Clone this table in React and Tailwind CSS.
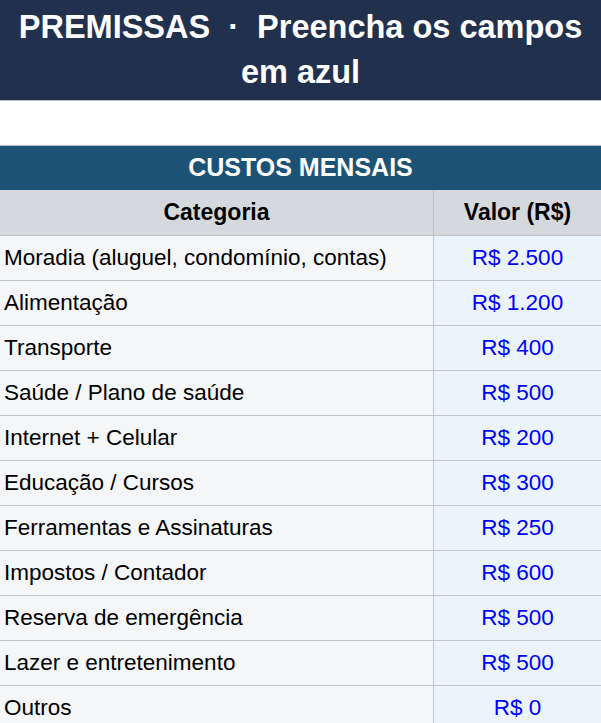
const rows = [
  ['Moradia (aluguel, condomínio, contas)', 'R$ 2.500'],
  ['Alimentação', 'R$ 1.200'],
  ['Transporte', 'R$ 400'],
  ['Saúde / Plano de saúde', 'R$ 500'],
  ['Internet + Celular', 'R$ 200'],
  ['Educação / Cursos', 'R$ 300'],
  ['Ferramentas e Assinaturas', 'R$ 250'],
  ['Impostos / Contador', 'R$ 600'],
  ['Reserva de emergência', 'R$ 500'],
  ['Lazer e entretenimento', 'R$ 500'],
  ['Outros', 'R$ 0'],
]

export default function App() {
  return (
    <div className="w-[601px] h-[723px] overflow-hidden bg-white font-['Liberation_Sans',Arial,sans-serif]">
      {/* Title */}
      <div className="h-[101px] bg-[#21304d] flex items-center justify-center text-center border-b border-[#b9bec4]">
        <h1 className="text-[32.5px] leading-[45px] font-bold text-white">
          PREMISSAS &nbsp;·&nbsp; Preencha os campos em azul
        </h1>
      </div>

      {/* Spacer */}
      <div className="h-[45px] border-b border-[#b9bec4]" />

      {/* Section */}
      <div className="h-[44px] bg-[#1b5276] flex items-center justify-center">
        <span className="text-[25px] font-bold text-white">CUSTOS MENSAIS</span>
      </div>

      <div className="grid grid-cols-[434px_1fr]">
        <div className="h-[46px] bg-[#d5d8dc] border-r border-b border-[#bfc3c8] flex items-center justify-center text-[23px] font-bold text-black">
          Categoria
        </div>
        <div className="h-[46px] bg-[#d5d8dc] border-b border-[#bfc3c8] flex items-center justify-center text-[23px] font-bold text-black">
          Valor (R$)
        </div>
        {rows.map(([cat, val]) => (
          <div key={cat} className="contents">
            <div className="h-[45px] bg-[#f4f6f8] border-r border-b border-[#c3c6ca] flex items-center pl-1 text-[22.5px] text-black">
              {cat}
            </div>
            <div className="h-[45px] bg-[#ebf3fc] border-b border-[#c3c6ca] flex items-center justify-center text-[22.5px] text-[#0000ff]">
              {val}
            </div>
          </div>
        ))}
      </div>
    </div>
  )
}
